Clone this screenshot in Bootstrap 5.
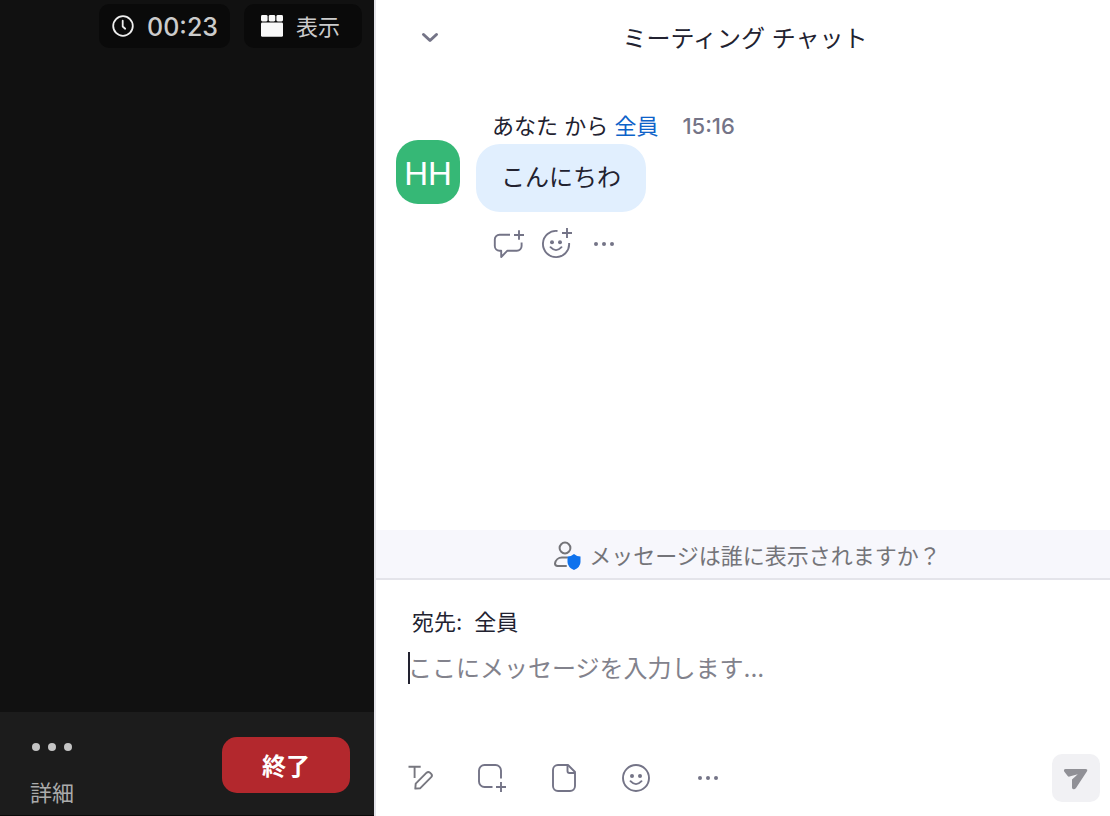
<!DOCTYPE html>
<html lang="ja">
<head>
<meta charset="utf-8">
<meta name="viewport" content="width=device-width, initial-scale=1">
<title>ミーティング チャット</title>
<link href="https://cdn.jsdelivr.net/npm/bootstrap@5.3.0/dist/css/bootstrap.min.css" rel="stylesheet">
<style>
  body { font-family: Inter, "Noto Sans CJK JP", sans-serif; font-size: 22px; line-height: 32px; color: #222230; }
  svg { display: block; flex-shrink: 0; }
  button.plain { background: none; border: 0; padding: 0; color: #747487; }
  .video-pane { width: 376px; background: #111; border-right: 2px solid #e4e4ea; color: #ccc; }
  .top-pills { padding: 4px 12px 0 0; gap: 14px; }
  .pill { background: #0a0a0a; border-radius: 10px; height: 44px; border: 0; color: #ccc; }
  .pill span { padding-top: 2px; }
  button.pill { padding: 0 22px 0 16px; gap: 12px; }
  .clock { padding: 0 12px; gap: 12px; font-size: 25px; font-weight: 500; }
  .video-bar { background: #1c1c1c; height: 104px; padding: 25px 24px 0 30px; border-bottom: 1px solid #0a0a0a; }
  .video-bar button.plain { color: #ababab; }
  .video-bar .caption { padding-top: 20px; }
  .end-btn { width: 128px; height: 56px; border-radius: 15px; background: #b3282d; color: #fff; font-size: 24px; font-weight: 700; border: 0; padding: 4px 0 0; }
  .chat-head { height: 76px; padding: 0 38px 0 42px; }
  .chat-head h1 { font-size: 24px; line-height: 32px; font-weight: 400; padding-top: 2px; }
  .chat-head .side { width: 24px; }
  .messages { padding: 34px 20px 0; }
  .avatar { width: 64px; height: 64px; border-radius: 22px; background: #36b876; color: #fff; font-family: "Liberation Sans", sans-serif; font-size: 33px; margin-top: 30px; padding-top: 3px; }
  .meta { padding-left: 16px; margin-bottom: 2px; }
  .meta a { color: #0d62c9; }
  .meta time { color: #747487; margin-left: 24px; font-weight: 500; }
  .bubble { background: #e1effe; border-radius: 24px; height: 68px; padding: 18px 25px; font-size: 24px; width: max-content; }
  .actions { padding: 16px 0 0 16px; gap: 16px; }
  .notice { background: #f7f7fc; color: #747479; height: 50px; border-bottom: 2px solid #e4e4ea; gap: 8px; padding: 3px 0 0 8px; }
  .compose { padding: 26px 10px 14px 28px; height: 236px; }
  .to-line { padding-left: 8px; }
  .to-line button { background: none; border: 0; padding: 0; color: inherit; }
  .entry { border: 0; outline: 0; padding: 2px 0 0; height: 32px; font-size: 24px; margin: 14px 0 0 4px; color: #222230; background: linear-gradient(#222230, #222230) left / 2px 32px no-repeat; }
  .entry::placeholder { color: #82828c; opacity: 1; }
  .tools { gap: 40px; }
  .send { width: 48px; height: 48px; border: 0; border-radius: 10px; background: #f1f1f4; color: #909096; }
</style>
</head>
<body>
<div class="d-flex min-vh-100">
  <aside class="video-pane d-flex flex-column flex-shrink-0">
    <div class="top-pills d-flex justify-content-end">
      <div class="pill clock d-flex align-items-center">
        <svg width="24" height="24" viewBox="0 0 24 24" fill="none" stroke="#eee" stroke-width="1.8" stroke-linecap="round" stroke-linejoin="round"><circle cx="12" cy="12" r="9.800"/><path d="M11.700 6.700v5.800l2.500 2.200"/></svg>
        <span>00:23</span>
      </div>
      <button type="button" class="pill d-flex align-items-center">
        <svg width="24" height="24" viewBox="0 0 24 24" fill="#f8f8f8"><rect x="1" y="1" width="6.600" height="6.400" rx="1.400"/><rect x="8.700" y="1" width="6.600" height="6.400" rx="1.400"/><rect x="16.400" y="1" width="6.600" height="6.400" rx="1.400"/><rect x="1" y="8.400" width="22" height="14.400" rx="1.400"/></svg>
        <span>表示</span>
      </button>
    </div>
    <div class="video-bar mt-auto d-flex justify-content-between align-items-start">
      <button type="button" class="plain">
        <svg width="44" height="20" viewBox="0 0 44 20" fill="#c4c4c4"><circle cx="6" cy="10" r="4"/><circle cx="22" cy="10" r="4"/><circle cx="38" cy="10" r="4"/></svg>
        <span class="caption d-block">詳細</span>
      </button>
      <button type="button" class="end-btn">終了</button>
    </div>
  </aside>

  <main class="flex-grow-1 d-flex flex-column">
    <header class="chat-head d-flex align-items-center justify-content-between">
      <button type="button" class="plain side" aria-label="閉じる">
        <svg width="24" height="24" viewBox="0 0 24 24" fill="none" stroke="currentColor" stroke-width="3" stroke-linecap="round" stroke-linejoin="round"><path d="M5.500 8.500l6.500 6 6.500-6"/></svg>
      </button>
      <h1 class="mb-0">ミーティング チャット</h1>
      <span class="side"></span>
    </header>

    <section class="messages flex-grow-1 d-flex align-items-start gap-3">
      <div class="avatar d-flex align-items-center justify-content-center flex-shrink-0">HH</div>
      <div>
        <div class="meta">あなた から <a href="#" class="text-decoration-none">全員</a><time>15:16</time></div>
        <div class="bubble">こんにちわ</div>
        <div class="actions d-flex">
          <button type="button" class="plain" aria-label="返信">
            <svg width="32" height="32" viewBox="0 0 32 32" fill="none" stroke="currentColor" stroke-width="1.900" stroke-linejoin="round"><path d="M18 6.800H7.500a4.700 4.700 0 0 0-4.700 4.700v6.500a4.700 4.700 0 0 0 4.700 4.700h1.700V29l6.200-6.300h9.500a4.700 4.700 0 0 0 4.700-4.700v-3.500M27 2.200v9.600M22 7h10"/></svg>
          </button>
          <button type="button" class="plain" aria-label="リアクション">
            <svg width="32" height="32" viewBox="0 0 32 32" fill="none" stroke="currentColor" stroke-width="1.900"><path d="M17.500 3A13.100 13.100 0 1 0 29.100 15M27 0v10M22 5h10"/><path d="M10.500 19.200q5.500 5.800 11 0" stroke-linecap="round"/><circle cx="12" cy="14.200" r="2" fill="currentColor" stroke="none"/><circle cx="20" cy="14.200" r="2" fill="currentColor" stroke="none"/></svg>
          </button>
          <button type="button" class="plain" aria-label="その他">
            <svg width="32" height="32" viewBox="0 0 32 32" fill="currentColor"><circle cx="8" cy="16" r="2"/><circle cx="16" cy="16" r="2"/><circle cx="24" cy="16" r="2"/></svg>
          </button>
        </div>
      </div>
    </section>

    <div class="notice d-flex align-items-center justify-content-center">
      <svg width="28" height="30" viewBox="0 0 28 30" fill="none" stroke="currentColor" stroke-width="2"><circle cx="12" cy="7" r="5.400"/><path d="M14 16.500H9a7 7 0 0 0-7 6q0 2.400 2.600 2.400H13" stroke-linecap="round"/><path d="M21 13q3 2.500 6.500 2.500v5.500q0 5-6.500 8-6.500-3-6.500-8v-5.500q3.500 0 6.500-2.500z" fill="#0e72ed" stroke="none"/></svg>
      <span>メッセージは誰に表示されますか？</span>
    </div>

    <form class="compose d-flex flex-column">
      <div class="to-line d-flex gap-2"><span>宛先: </span><button type="button" class="ms-1">全員</button></div>
      <input type="text" class="entry" aria-label="メッセージ" placeholder="ここにメッセージを入力します...">
      <div class="d-flex align-items-center justify-content-between mt-auto">
        <div class="tools d-flex">
          <button type="button" class="plain" aria-label="書式">
            <svg width="32" height="32" viewBox="0 0 32 32" fill="none" stroke="#77777f" stroke-width="1.900" stroke-linejoin="round"><path d="M4.500 4.700h12.200M10.600 4.700V16"/><path d="M11.300 26.600l.4-5L22.600 10.700q1.700-1.600 3.400 0l1.200 1.200q1.500 1.600 0 3.300L16.300 26.200z"/></svg>
          </button>
          <button type="button" class="plain" aria-label="スクリーンショット">
            <svg width="32" height="32" viewBox="0 0 32 32" fill="none" stroke="currentColor" stroke-width="1.900"><path d="M16.500 25H8.500A5.500 5.500 0 0 1 3 19.500V8.500A5.500 5.500 0 0 1 8.500 3h11A5.500 5.500 0 0 1 25 8.500V16.500M25 20v10M20 25h10"/></svg>
          </button>
          <button type="button" class="plain" aria-label="ファイル">
            <svg width="32" height="32" viewBox="0 0 32 32" fill="none" stroke="currentColor" stroke-width="1.900" stroke-linejoin="round"><path d="M20 3H10a5 5 0 0 0-5 5v16a5 5 0 0 0 5 5h12a5 5 0 0 0 5-5V10z"/><path d="M19.500 3v6q0 2 2 2H27"/></svg>
          </button>
          <button type="button" class="plain" aria-label="絵文字">
            <svg width="32" height="32" viewBox="0 0 32 32" fill="none" stroke="currentColor" stroke-width="1.900"><circle cx="16" cy="16" r="13"/><path d="M10.500 19.200q5.500 5.800 11 0" stroke-linecap="round"/><circle cx="12" cy="14" r="2" fill="currentColor" stroke="none"/><circle cx="20" cy="14" r="2" fill="currentColor" stroke="none"/></svg>
          </button>
          <button type="button" class="plain" aria-label="その他">
            <svg width="32" height="32" viewBox="0 0 32 32" fill="currentColor"><circle cx="8" cy="16" r="2"/><circle cx="16" cy="16" r="2"/><circle cx="24" cy="16" r="2"/></svg>
          </button>
        </div>
        <button type="submit" class="send d-flex align-items-center justify-content-center" aria-label="送信">
          <svg width="28" height="28" viewBox="0 0 28 28" fill="currentColor"><path d="M3.500 5h20q2.500 0 1.500 2.300L14 24q-1.200 1.500-2.500 1.200-1.500-.2-1.500-1.700V15.500l5.800-5.300L7.500 12.600q-1 .3-1.800-.5L2.200 7.500Q1.300 5.300 3.500 5z"/></svg>
        </button>
      </div>
    </form>
  </main>
</div>
<script src="https://cdn.jsdelivr.net/npm/bootstrap@5.3.0/dist/js/bootstrap.bundle.min.js"></script>
</body>
</html>
